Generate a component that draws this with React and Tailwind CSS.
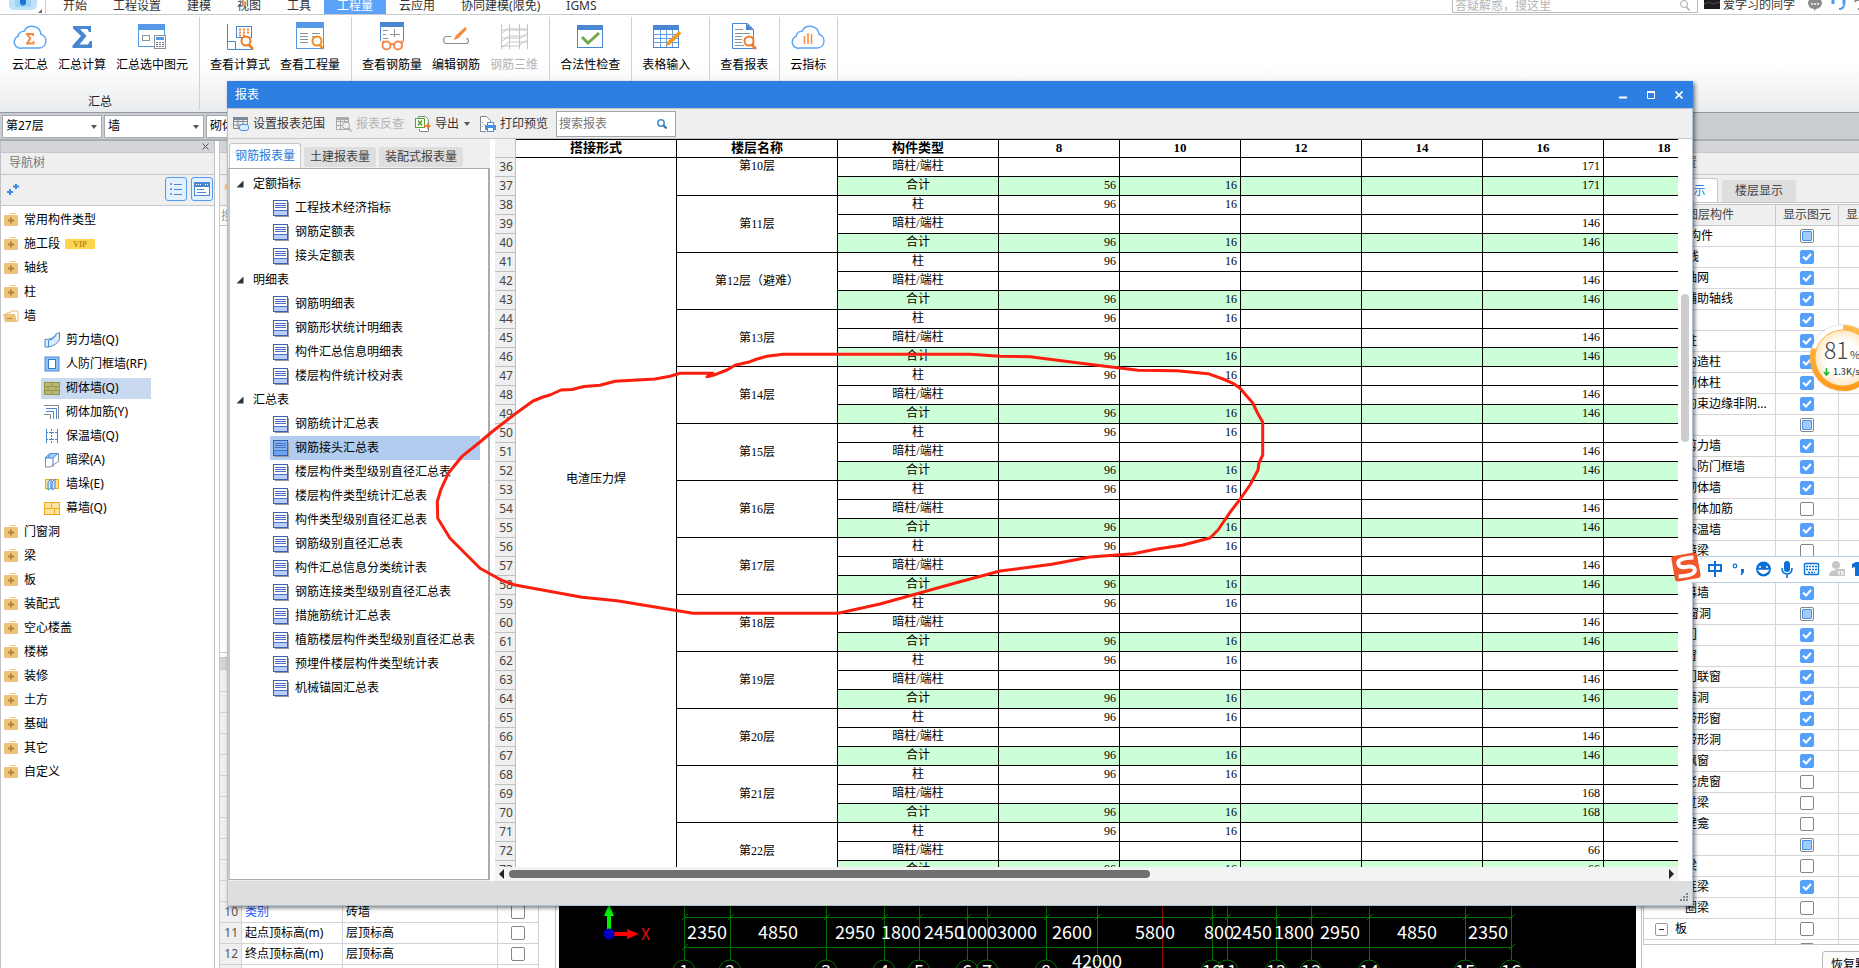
import React from "react";

/* ---------- ribbon icons (36 x 32) ---------- */
const CLOUD = "M10 28h17a7 7 0 0 0 2-13.700a9 9 0 0 0-17-3a6 6 0 0 0-6 5a6.200 6.200 0 0 0 4 11.700z";
const RIBBON_ICONS = {
  cloudSum: (
    <>
      <path d={CLOUD} fill="#fff" stroke="#5ba7f5" strokeWidth="1.500" />
      <path d="M14 13h8v3h-1.500l-.5-1h-3l2.500 3.500l-2.500 4h3.500l.5-1.500h1.500v3.500h-8.500v-1.500l3.200-4.500l-3.200-4z" fill="#f58b3c" />
    </>
  ),
  sigma: <path d="M9 6h18v6h-2l-1.500-3h-7.500l6.500 7l-7 8.500h8.500l2-3.500h2v7H8.500v-2.500l8.500-9.500l-8-7.500z" fill="#4a87d3" />,
  selectSum: (
    <>
      <rect x="4.500" y="4.500" width="26" height="22" fill="#fff" stroke="#5598e6" />
      <rect x="4" y="4" width="27" height="6" fill="#5598e6" />
      <rect x="8.500" y="15.500" width="7" height="5" fill="#fff" stroke="#8a9299" />
      <rect x="20.500" y="15.500" width="11" height="13" fill="#fff" stroke="#8a9299" />
      <rect x="22" y="17" width="8" height="3" fill="#5598e6" />
      <path d="M22 22.500h8M22 24.500h8M22 26.500h8" stroke="#6b7b8a" strokeDasharray="2 1" />
    </>
  ),
  formula: (
    <>
      <path d="M5.500 4v25.500H31M5.500 21.500h8v8" fill="none" stroke="#4a87d3" />
      <rect x="14.500" y="6.500" width="15" height="11" fill="#fff" stroke="#4a87d3" />
      <path d="M17 9.500h10M17 12.500h10M17 15.500h6" stroke="#f58b3c" strokeWidth="2" strokeDasharray="2 2" />
      <circle cx="24" cy="21" r="4.500" fill="#fff" stroke="#f07b28" strokeWidth="2" />
      <path d="M27 25l4 4" stroke="#f07b28" strokeWidth="2.500" />
    </>
  ),
  quantity: (
    <>
      <rect x="4.500" y="3.500" width="27" height="25" fill="#fff" stroke="#5598e6" />
      <rect x="4" y="2" width="28" height="6" fill="#5598e6" />
      <path d="M8 13.500h8M8 16.500h8M8 19.500h8M8 22.500h8M20 13.500h8M20 16.500h4" stroke="#8a9299" />
      <circle cx="25" cy="21" r="4.500" fill="#fff" stroke="#f58b20" strokeWidth="2" />
      <path d="M28 25l3 4" stroke="#f58b20" strokeWidth="2.500" />
    </>
  ),
  rebarQty: (
    <>
      <path d="M6.500 21V3h23v18" fill="#fff" stroke="#4a87d3" />
      <rect x="6" y="2" width="24" height="5" fill="#4a87d3" />
      <path d="M9 10.500h5M9 14.500h3M9 18.500h5M16 14.500h10M20.500 9v8" stroke="#8a9299" />
      <circle cx="12.500" cy="25.500" r="4" fill="#fff" stroke="#f58b4c" strokeWidth="2" />
      <circle cx="24" cy="25.500" r="4" fill="#fff" stroke="#f58b4c" strokeWidth="2" />
      <path d="M16 25q2-2 4 0M8 23l2-2M29 23l-2-2" fill="none" stroke="#f58b4c" strokeWidth="2" />
    </>
  ),
  rebarEdit: (
    <>
      <path d="M13 16.500H9a3.500 3.500 0 0 0 0 7h19a2.500 2.500 0 0 0 0-5" fill="none" stroke="#8a9299" strokeWidth="1.200" />
      <path d="M16 20l1.500-4L27 7l2 2L20 18.500z" fill="#f58b3c" />
    </>
  ),
  rebar3d: <path d="M5.500 4v25M13.500 4v25M23.500 4v25M31.500 4v25M5 10h26.500M5 18h20l6-5M5 26h17l9-6M5 14l6-5h20M5 22l8-6h18M5 28l8-6h18" fill="none" stroke="#c3c5c8" />,
  check: (
    <>
      <rect x="5.500" y="5.500" width="25" height="22" fill="#fff" stroke="#4a87d3" />
      <rect x="5" y="5" width="26" height="5" fill="#4a87d3" />
      <path d="M10 17l6 6l11-10" fill="none" stroke="#6cab4c" strokeWidth="3" />
    </>
  ),
  tableInput: (
    <>
      <rect x="5.500" y="6.500" width="25" height="21" fill="#fff" stroke="#4a87d3" />
      <rect x="5" y="5" width="26" height="5" fill="#4a87d3" />
      <path d="M5 14.500h25M5 18.500h25M5 22.500h25M12.500 10v17M18.500 10v17M24.500 10v17" stroke="#6a9fe0" />
      <path d="M18 26l1-4l12-11l2.500 2.500L22 24.500z" fill="#f5961e" />
    </>
  ),
  report: (
    <>
      <path d="M6.500 3.500h15l6 6v19h-21z" fill="#fff" stroke="#4a87d3" />
      <path d="M20 3v7h7.500z" fill="#4a87d3" />
      <path d="M9 9.500h8M9 13.500h15M9 16.500h7M9 19.500h7M9 22.500h7M9 25.500h9" stroke="#8a9299" />
      <circle cx="23" cy="21" r="4.500" fill="#fff" stroke="#f07b28" strokeWidth="2" />
      <path d="M26 25l4 4" stroke="#f07b28" strokeWidth="2.500" />
    </>
  ),
  cloudIndex: (
    <>
      <path d={CLOUD} fill="#fff" stroke="#5ba7f5" strokeWidth="1.500" />
      <path d="M14.500 16v8M18 13v11M21.500 14v10" stroke="#f58b3c" strokeWidth="1.500" />
    </>
  ),
};

const RIBBON = [
  { cls: "pl-3 pr-[11px]", caption: "汇总", items: [["云汇总", "cloudSum"], ["汇总计算", "sigma"], ["汇总选中图元", "selectSum"]] },
  { cls: "pl-[10px] pr-[11px]", items: [["查看计算式", "formula"], ["查看工程量", "quantity"]] },
  { cls: "pl-[10px] pr-[11px]", items: [["查看钢筋量", "rebarQty"], ["编辑钢筋", "rebarEdit"], ["钢筋三维", "rebar3d", true]] },
  { cls: "pl-[10px] pr-[11px]", items: [["合法性检查", "check"]] },
  { cls: "pl-[10px] pr-[19px]", items: [["表格输入", "tableInput"]] },
  { cls: "pl-[10px] pr-[11px]", items: [["查看报表", "report"]] },
  { cls: "pl-[10px] pr-[11px]", items: [["云指标", "cloudIndex"]] },
];

const MENU = ["开始", "工程设置", "建模", "视图", "工具", "工程量", "云应用", "协同建模(限免)", "IGMS"];

function TopBar() {
  return (
    <header className="flex h-[15px] shrink-0 items-start overflow-hidden border-b border-[#c9cacc] bg-white">
      <div className="flex w-[46px] shrink-0 justify-center border-r border-[#c9cacc]">
        <svg width="34" height="14" viewBox="0 0 34 14" className="ml-1">
          <path d="M1 0h28v5a5 5 0 0 1-5 5H6a5 5 0 0 1-5-5z" fill="#bfe3fb" />
          <path d="M7 0h16v7H7z" fill="#9fd3f8" />
          <path d="M12 0h6v2a3 3.500 0 0 1-6 0z" fill="#1677d8" />
          <path d="M34 9v4h-4z" fill="#666" />
        </svg>
      </div>
      <nav className="ml-1 flex">
        {MENU.map((m) => (
          <button
            key={m}
            className={
              "h-[14px] px-[13px] pb-[3px] leading-[11px] whitespace-nowrap " +
              (m === "工程量" ? "bg-[#5ba3f8] text-white" : "text-[#333]")
            }
          >
            {m}
          </button>
        ))}
      </nav>
      <div className="ml-auto flex shrink-0 items-start">
        <label className="flex h-[13px] w-[246px] items-center border border-t-0 border-[#bbb] px-[2px] pb-[2px]">
          <input aria-label="答疑解惑" placeholder="答疑解惑，搜这里" className="h-3 min-w-0 flex-1 bg-transparent leading-3 outline-none placeholder:text-[#b5b5b5]" />
          <svg width="12" height="11" viewBox="0 0 12 11" className="mr-1">
            <circle cx="5" cy="4" r="3.500" fill="none" stroke="#aaa" />
            <path d="M7.500 7l3 3.500" stroke="#aaa" strokeWidth="1.500" />
          </svg>
        </label>
        <svg width="16" height="9" viewBox="0 0 16 9" className="ml-[6px]">
          <rect width="16" height="9" fill="#1c1c20" />
          <path d="M0 4l5-2l4 2l7-2" stroke="#5c4a4e" fill="none" />
        </svg>
        <span className="ml-[3px] leading-[9px] whitespace-nowrap text-[#333]">爱学习的同学</span>
        <svg width="56" height="12" viewBox="0 0 56 12" className="ml-2">
          <path d="M5 3a7 5.500 0 0 1 14 0a7 6 0 0 1-6 6l-2 2v-2a6 6 0 0 1-6-6z" fill="#8b8b8b" />
          <path d="M8 4h8" stroke="#fff" strokeWidth="1.500" strokeDasharray="2 1" />
          <path d="M30 0v4M41 0v4" stroke="#4f9cf3" strokeWidth="3" />
          <path d="M41 4q0 5-5 5" fill="none" stroke="#4f9cf3" strokeWidth="2" />
          <path d="M52 2q1-3 4-2t1 5v2M56 8v2" fill="none" stroke="#888" strokeWidth="2" />
        </svg>
      </div>
    </header>
  );
}

function Ribbon() {
  return (
    <section className="flex h-[98px] shrink-0 items-stretch border-b border-[#94979c] bg-gradient-to-b from-white via-white to-[#e9ecee]">
      {RIBBON.map((g, i) => (
        <div key={i} className={"mt-[2px] mb-[2px] flex flex-col justify-between border-r border-[#d0d2d4] " + g.cls}>
          <div className="flex gap-[10px]">
            {g.items.map(([label, icon, off]) => (
              <button key={label} disabled={!!off} className={"flex flex-col items-center pt-[3px] whitespace-nowrap " + (off ? "text-[#b3b3b3]" : "text-black")}>
                <svg width="36" height="32" viewBox="0 0 36 32">{RIBBON_ICONS[icon]}</svg>
                <span className="mt-[5px] leading-4">{label}</span>
              </button>
            ))}
          </div>
          {g.caption && <div className="text-center leading-4 text-[#222]">{g.caption}</div>}
        </div>
      ))}
    </section>
  );
}

function Combo({ label, value }) {
  return (
    <label className="relative block w-[100px]">
      <select aria-label={label} className="h-[23px] w-full appearance-none border border-[#a5a8ac] bg-white pl-[3px] leading-5 text-black outline-none">
        <option>{value}</option>
      </select>
      <svg width="6" height="4" viewBox="0 0 6 4" className="pointer-events-none absolute top-[10px] right-[5px]">
        <path d="M0 0h6L3 4z" fill="#555" />
      </svg>
    </label>
  );
}

/* ---------- navigation tree ---------- */
const WALLS = [
  ["剪力墙(Q)", <><path d="M1 7.500q8 0 11-5.500l3.500-1.500v7q-3 6-11 7.500H1z" fill="#dcebfb" stroke="#4a87d3" /><path d="M4.500 15V8.500q5-1 7.500-5" fill="none" stroke="#4a87d3" /></>],
  ["人防门框墙(RF)", <><rect x="1" y="1" width="14" height="14" fill="#8fc0f6" stroke="#4a8fe0" /><rect x="4.500" y="3.500" width="7" height="9" fill="#fff" stroke="#3a78c8" /></>],
  ["砌体墙(Q)", <><rect x=".5" y="2.500" width="15" height="12" fill="#b5b878" stroke="#989440" /><path d="M0 6.500h16M0 10.500h16M8 2v4M4 6v4M12 6v4M8 10v4" stroke="#989440" /></>],
  ["砌体加筋(Y)", <><path d="M2 4.500h10.500V15M2 7.500h7.500V15" fill="none" stroke="#4a87d3" /><path d="M0 1.500h14.500V15M0 10.500h6.500V15" fill="none" stroke="#888" /></>],
  ["保温墙(Q)", <><path d="M2.500 1v14M13.500 1v14" stroke="#4a87d3" /><path d="M7.500 1v14M2 4.500h12M2 11.500h12" stroke="#4a87d3" strokeDasharray="2 1" /></>],
  ["暗梁(A)", <><path d="M1.500 6l5-4.500h8v8L6 15H1.500z" fill="#fff" stroke="#8a9299" /><path d="M1 6l5-4.500h8L9 6zM5 6V3M9 6v9" fill="#a9d0fa" stroke="#4a87d3" /></>],
  ["墙垛(E)", <><rect x="1.500" y="3.500" width="13" height="9" fill="#ffe2a0" stroke="#f0a818" /><path d="M4 6l3-3v9l-3 2zM8 6l3-3v9l-3 2z" fill="#cfe3fb" stroke="#4a87d3" /></>],
  ["幕墙(Q)", <><rect x=".5" y="2.500" width="15" height="12" fill="#ffe2a0" stroke="#f0a818" /><path d="M0 8.500h16M7.500 2v6M10.500 8v6" stroke="#f0a818" /></>],
];
const NAV_TOP = ["常用构件类型", "施工段", "轴线", "柱"];
const NAV_BOTTOM = ["门窗洞", "梁", "板", "装配式", "空心楼盖", "楼梯", "装修", "土方", "基础", "其它", "自定义"];

function Folder({ open }) {
  return (
    <svg width="16" height="16" viewBox="0 0 16 16" className="shrink-0">
      {open ? (
        <>
          <path d="M3 5h4l1-2h7v10H3z" fill="#fff" stroke="#e8bf7a" />
          <path d="M0 6h12l2 8H2z" fill="#ecc27c" />
          <path d="M4 10.500h5" stroke="#b88530" />
        </>
      ) : (
        <>
          <path d="M7 1h6v1H7z" fill="#ecc27c" />
          <rect x="1" y="3" width="14" height="11" rx="1" fill="#ecc27c" />
          <path d="M8 5.500v6M5 8.500h6" stroke="#b88530" strokeWidth="2" />
        </>
      )}
    </svg>
  );
}

function NavFolder({ label, open }) {
  return (
    <li className="flex h-6 items-center gap-[5px] pl-[2px]">
      <Folder open={open} />
      <span>{label}</span>
      {label === "施工段" && (
        <span className="h-[10px] w-[30px] bg-[#ffd54f] text-center font-['Liberation_Serif',serif] text-[8px] leading-[11px] font-bold text-[#b98a1a]">VIP</span>
      )}
    </li>
  );
}

function NavPanel() {
  return (
    <aside className="flex w-[215px] shrink-0 flex-col border-x border-[#bfc1c5] bg-white">
      <div className="flex h-3 shrink-0 items-center justify-end border-b border-[#c4c6ca] bg-[#d4d5da] pr-[5px]">
        <button aria-label="关闭导航树">
          <svg width="7" height="7" viewBox="0 0 7 7"><path d="M.5 .5l6 6M6.500 .5l-6 6" stroke="#555" /></svg>
        </button>
      </div>
      <h2 className="h-[22px] shrink-0 border-b border-[#c4c6ca] bg-[#efefef] pl-2 leading-5 text-[#777]">导航树</h2>
      <div className="flex h-[31px] shrink-0 items-center gap-1 border-b border-[#c4c6ca] bg-[#efefef] pr-px pb-[2px] pl-[6px]">
        <svg width="12" height="12" viewBox="0 0 12 12"><path d="M3 6v6M0 9h6M9 1v5M6 3.500h6" stroke="#3e86e0" strokeWidth="2" /></svg>
        <button aria-label="列表视图" className="ml-auto grid h-6 w-[22px] place-items-center rounded-[3px] border border-[#4f9cf3] bg-[#e4f0fd]">
          <svg width="14" height="14" viewBox="0 0 14 14">
            <path d="M5 2.500h8M5 7.500h8M5 12.500h8" stroke="#4a87d3" />
            <path d="M1.500 1.500h1v1h-1zM1.500 6.500h1v1h-1zM1.500 11.500h1v1h-1z" fill="none" stroke="#4a87d3" />
          </svg>
        </button>
        <button aria-label="卡片视图" className="grid h-6 w-[22px] place-items-center rounded-[3px] border border-[#4f9cf3] bg-[#e4f0fd]">
          <svg width="16" height="14" viewBox="0 0 16 14">
            <rect x=".5" y=".5" width="15" height="13" fill="#fff" stroke="#4a87d3" />
            <rect width="16" height="5" fill="#4a87d3" />
            <path d="M2 2.500h6M11 2.500h3" stroke="#fff" strokeDasharray="1 1" />
            <path d="M3 7.500h7M3 10.500h9" stroke="#4a87d3" />
          </svg>
        </button>
      </div>
      <ul className="pt-[2px]">
        {NAV_TOP.map((n) => <NavFolder key={n} label={n} />)}
        <NavFolder label="墙" open />
        {WALLS.map(([n, icon]) => (
          <li key={n} className="flex h-6 items-center pl-10">
            <div className={"flex h-[21px] w-[110px] items-center gap-[6px] pl-[3px] " + (n === "砌体墙(Q)" ? "bg-[#c9d9ef]" : "")}>
              <svg width="16" height="16" viewBox="0 0 16 16" className="shrink-0">{icon}</svg>
              <span className="whitespace-nowrap">{n}</span>
            </div>
          </li>
        ))}
        {NAV_BOTTOM.map((n) => <NavFolder key={n} label={n} />)}
      </ul>
    </aside>
  );
}

/* ---------- check box in the tables ---------- */
function Tick({ label, state }) {
  return (
    <label className="grid place-items-center">
      <input
        type="checkbox"
        aria-label={label}
        defaultChecked={state === "on"}
        className="col-start-1 row-start-1 size-[14px] appearance-none rounded-[2px] border border-[#858585] bg-white checked:border-[#55a1fa] checked:bg-[#55a1fa]"
      />
      {state === "on" && (
        <svg width="10" height="8" viewBox="0 0 10 8" className="pointer-events-none col-start-1 row-start-1">
          <path d="M1 3.500l3 3l5-5.500" fill="none" stroke="#fff" strokeWidth="2" />
        </svg>
      )}
      {state === "mid" && <span className="pointer-events-none col-start-1 row-start-1 size-[10px] rounded-[1px] border border-[#3b93f7] bg-[#a2cbfb]" />}
    </label>
  );
}

/* ---------- component list and properties ---------- */
const PROPS = [
  ...Array.from({ length: 9 }, () => ["", "", ""]),
  ["10", "类别", "砖墙"],
  ["11", "起点顶标高(m)", "层顶标高"],
  ["12", "终点顶标高(m)", "层顶标高"],
  ["13", "", ""],
];

function PropertyColumn() {
  return (
    <section className="flex w-[337px] shrink-0 flex-col border-x border-[#c4c6ca] bg-white">
      <div className="flex h-[512px] shrink-0 flex-col border-b border-[#c4c6ca]">
        <div className="h-3 border-b border-[#c4c6ca] bg-[#d4d5da]" />
        <div className="h-[22px] border-b border-[#c4c6ca] bg-[#efefef]" />
        <div className="flex h-[31px] border-b border-[#c4c6ca] bg-[#efefef] pl-1">
          <svg width="8" height="8" viewBox="0 0 8 8" className="mt-2"><path d="M4 0v8M0 4h8M1 1l6 6M7 1l-6 6" stroke="#f5a12e" /></svg>
        </div>
        <div className="h-[20px] border-b border-[#c4c6ca] pl-[1px] leading-[19px] text-[#999]">搜</div>
      </div>
      <div className="mt-1 h-[13px] shrink-0 border-y border-[#c4c6ca] bg-[#d4d5da]" />
      <div className="h-[22px] shrink-0 border-b border-[#d2d2d2] bg-[#efefef]" />
      <div className="h-[21px] shrink-0 border-b border-[#d2d2d2] bg-[#efefef]" />
      <table className="w-[319px] table-fixed border-separate border-spacing-0">
        <colgroup>
          <col className="w-[22px]" /><col className="w-[101px]" /><col className="w-[155px]" /><col className="w-[41px]" />
        </colgroup>
        <tbody>
          {PROPS.map(([n, name, value], i) => (
            <tr key={i} className="h-[21px]">
              <td className="border-r border-b border-[#d2d2d2] bg-[#efefef] p-0 pr-[3px] text-right leading-5 text-[#555]">{n}</td>
              <td className={"border-r border-b border-[#d2d2d2] p-0 pl-[3px] leading-5 whitespace-nowrap " + (n === "10" ? "text-[#1f5cff]" : "")}>{name}</td>
              <td className="border-r border-b border-[#d2d2d2] p-0 pl-[3px] leading-5">{value}</td>
              <td className="border-r border-b border-[#d2d2d2] p-0"><Tick label={"附加 " + (name || i + 1)} /></td>
            </tr>
          ))}
        </tbody>
      </table>
    </section>
  );
}

/* ---------- drawing canvas ---------- */
const AXES = [125, 171, 267, 325, 360, 408, 428, 487, 538, 653, 668, 717, 752, 810, 906, 952];
const DIMS = [
  [148, "2350"], [219, "4850"], [296, "2950"], [342, "1800"], [385, "2450"], [418, "1000"], [458, "3000"], [513, "2600"],
  [596, "5800"], [660, "800"], [693, "2450"], [735, "1800"], [781, "2950"], [858, "4850"], [929, "2350"],
];

function Canvas() {
  return (
    <section className="flex min-w-0 flex-1 items-end overflow-hidden bg-black">
      <svg width="1077" height="68" viewBox="0 0 1077 68" className="shrink-0 font-['Noto_Sans_CJK_SC',sans-serif]">
        <path d="M603.500 0v68" stroke="#8c0c0c" />
        <g stroke="#007200" fill="none">
          <path d="M125 17.500h827M125 47.500h827" />
          {AXES.map((x) => (
            <g key={x}>
              <path d={`M${x}.500 0v60`} />
              <path d={`M${x - 2} 20l6-6`} />
              <circle cx={x} cy="71" r="11" />
            </g>
          ))}
          <path d="M123 50l6-6M950 50l6-6" />
        </g>
        <g fill="#fff" fontSize="18" textAnchor="middle">
          {DIMS.map(([x, t]) => <text key={x} x={x} y="39">{t}</text>)}
          <text x="538" y="68">42000</text>
          {AXES.map((x, i) => i !== 8 && <text key={x} x={x} y="78">{i + 1}</text>)}
        </g>
        <path d="M50 34V12" stroke="#00f000" strokeWidth="4" />
        <path d="M45 16l5-12l5 12z" fill="#00f000" />
        <path d="M50 34h20" stroke="#f00" strokeWidth="4" />
        <path d="M68 29l12 5l-12 5z" fill="#f00" />
        <circle cx="50" cy="34" r="5.500" fill="#0000c0" />
        <text x="82" y="40" fill="#e01010" fontSize="16">X</text>
      </svg>
    </section>
  );
}

/* ---------- layer panel ---------- */
const LAYERS = [
  ["所有构件", "mid", 0], ["轴线", "on", 1], ["轴网", "on", 2], ["辅助轴线", "on", 2], ["柱", "on", 1], ["柱", "on", 2],
  ["构造柱", "on", 2], ["砌体柱", "on", 2], ["约束边缘非阴...", "on", 2], ["墙", "mid", 1], ["剪力墙", "on", 2],
  ["人防门框墙", "on", 2], ["砌体墙", "on", 2], ["砌体加筋", "off", 2], ["保温墙", "on", 2], ["暗梁", "off", 2],
  ["墙垛", "on", 2], ["幕墙", "on", 2], ["门窗洞", "mid", 1], ["门", "on", 2], ["窗", "on", 2], ["门联窗", "on", 2],
  ["墙洞", "on", 2], ["带形窗", "on", 2], ["带形洞", "on", 2], ["飘窗", "on", 2], ["老虎窗", "off", 2], ["过梁", "off", 2],
  ["壁龛", "off", 2], ["梁", "mid", 1], ["梁", "off", 2], ["连梁", "on", 2], ["圈梁", "off", 2], ["板", "off", 1], ["", "off", 2],
];
const INDENT = ["pl-[21px]", "pl-[31px]", "pl-[41px]"];

function LayerPanel() {
  return (
    <aside className="flex w-[223px] shrink-0 flex-col overflow-hidden bg-white pl-[5px]">
      <div className="flex flex-1 flex-col border-l border-[#bfc1c5]">
        <div className="h-3 shrink-0 border-b border-[#c4c6ca] bg-[#d4d5da]" />
        <h2 className="h-[22px] shrink-0 border-b border-[#c4c6ca] bg-[#efefef] pl-[7px] leading-5 text-[#777]">显示设置</h2>
        <div className="flex h-[28px] shrink-0 items-end gap-1 border-b border-[#c4c6ca] bg-[#efefef] pl-[3px]">
          <button className="h-6 w-[73px] rounded-tr-[3px] border border-b-0 border-[#c4c6ca] bg-white text-[#2a7fe0]">图元显示</button>
          <button className="h-[22px] w-[74px] rounded-t-[3px] bg-[#dedede] text-[#444]">楼层显示</button>
        </div>
        <div className="mt-px ml-px h-[741px] shrink-0 overflow-hidden border border-r-0 border-[#c4c6ca]">
          <table className="w-[273px] table-fixed border-separate border-spacing-0">
            <colgroup><col className="w-[132px]" /><col className="w-[63px]" /><col className="w-[78px]" /></colgroup>
            <thead>
              <tr className="h-[21px] bg-[#efefef] text-[#444]">
                <th className="border-r border-b border-[#c8c8c8] p-0 pl-[42px] text-left leading-5 font-normal">图层构件</th>
                <th className="border-r border-b border-[#c8c8c8] p-0 leading-5 font-normal">显示图元</th>
                <th className="border-r border-b border-[#c8c8c8] p-0 pl-[7px] text-left leading-5 font-normal">显示名称</th>
              </tr>
            </thead>
            <tbody>
              {LAYERS.map(([name, st, lvl], i) => (
                <tr key={i} className="h-[21px]">
                  <td className="border-r border-b border-[#d6d6d6] p-0">
                    <div className={"flex h-5 items-center whitespace-nowrap " + (name === "板" ? "pl-[11px]" : INDENT[lvl])}>
                      {name === "板" && (
                        <button aria-label="折叠板" className="mr-[7px] grid size-[13px] place-items-center rounded-[2px] border border-[#999]">
                          <svg width="5" height="1" viewBox="0 0 5 1"><path d="M0 .5h5" stroke="#333" /></svg>
                        </button>
                      )}
                      {name}
                    </div>
                  </td>
                  <td className="border-r border-b border-[#d6d6d6] p-0"><Tick label={"显示 " + name} state={st} /></td>
                  <td className="border-b border-[#d6d6d6] p-0" />
                </tr>
              ))}
            </tbody>
          </table>
        </div>
        <div className="flex pt-[6px] pl-[180px]">
          <button className="h-7 w-[66px] shrink-0 rounded-[3px] border border-[#b8b8b8] bg-[#fbfbfb] whitespace-nowrap">恢复默认</button>
        </div>
      </div>
    </aside>
  );
}

/* ---------- report dialog ---------- */
const REPORTS = [
  ["定额指标", ["工程技术经济指标", "钢筋定额表", "接头定额表"]],
  ["明细表", ["钢筋明细表", "钢筋形状统计明细表", "构件汇总信息明细表", "楼层构件统计校对表"]],
  ["汇总表", ["钢筋统计汇总表", "钢筋接头汇总表", "楼层构件类型级别直径汇总表", "楼层构件类型统计汇总表", "构件类型级别直径汇总表", "钢筋级别直径汇总表", "构件汇总信息分类统计表", "钢筋连接类型级别直径汇总表", "措施筋统计汇总表", "植筋楼层构件类型级别直径汇总表", "预埋件楼层构件类型统计表", "机械锚固汇总表"]],
];

function ReportIcon({ active }) {
  return (
    <svg width="17" height="17" viewBox="0 0 17 17" className="shrink-0">
      <path d="M2 2h14v15H2z" fill="#9a9a9a" />
      <rect x=".5" y=".5" width="14" height="15" fill={active ? "#7fb4f4" : "#fff"} stroke="#3c5fae" />
      <rect x="1" y="10" width="13" height="5" fill={active ? "#6aa3ee" : "#b9cdfb"} />
      <path d="M2 3.500h11M2 5.500h11M2 7.500h11M1 10.500h13" stroke="#4a6fc4" />
    </svg>
  );
}

function ReportTree() {
  return (
    <ul className="min-h-0 flex-1 overflow-hidden border-x-2 border-y border-[#a9abae] border-l-[#c4c6ca] bg-white pt-[3px]">
      {REPORTS.map(([g, items]) => (
        <li key={g}>
          <div className="flex h-6 items-center gap-[9px] pl-[6px]">
            <svg width="8" height="8" viewBox="0 0 8 8"><path d="M7.500 .5v7h-7z" fill="#333" /></svg>
            <span>{g}</span>
          </div>
          <ul>
            {items.map((t) => (
              <li key={t} className="pr-2 pl-10">
                <button className={"flex h-6 w-full items-center gap-[5px] pl-[3px] text-left whitespace-nowrap " + (t === "钢筋接头汇总表" ? "bg-[#b1ccee]" : "")}>
                  <ReportIcon active={t === "钢筋接头汇总表"} />
                  <span>{t}</span>
                </button>
              </li>
            ))}
          </ul>
        </li>
      ))}
    </ul>
  );
}

const DIAMETERS = ["8", "10", "12", "14", "16", "18"];
const steel = (floor) => (floor === 10 ? "171" : floor === 21 ? "168" : floor === 22 ? "66" : "146");
const ROWS = Array.from({ length: 38 }, (_, i) => {
  const n = 36 + i;
  const floor = 10 + Math.floor((n - 35) / 3);
  const kind = (n - 35) % 3;
  const name = floor === 12 ? "第12层（避难）" : `第${floor}层`;
  const d8 = floor === 10 ? "56" : "96";
  const values =
    kind === 0 ? [d8, "16", "", "", "", ""] : kind === 1 ? ["", "", "", "", steel(floor), ""] : [d8, "16", "", "", steel(floor), ""];
  return { n, kind, name, values, type: ["柱", "暗柱/端柱", "合计"][kind] };
});

function ReportTable() {
  return (
    <table className="w-[1230px] table-fixed border-separate border-spacing-0 font-['Liberation_Serif','Noto_Sans_CJK_SC',serif]">
      <colgroup>
        <col className="w-[21px]" /><col className="w-[161px]" /><col className="w-[161px]" /><col className="w-[161px]" />
        {DIAMETERS.map((d) => <col key={d} className="w-[121px]" />)}
      </colgroup>
      <thead>
        <tr className="h-[19px] text-[13px]">
          <td className="border-r border-b border-[#c0c0c0] bg-[#f0f0f0] p-0" />
          {["搭接形式", "楼层名称", "构件类型", ...DIAMETERS].map((h) => (
            <th key={h} className="border-t border-r border-b border-black p-0 pb-[2px] leading-[15px]">{h}</th>
          ))}
        </tr>
      </thead>
      <tbody>
        {ROWS.map(({ n, kind, name, values, type }, i) => (
          <tr key={n} className="h-[19px]">
            <th className="border-r border-b border-[#c0c0c0] bg-[#f0f0f0] p-0 pl-[2px] font-['Noto_Sans',sans-serif] leading-[18px] font-normal text-[#444]">{n}</th>
            {i === 0 && <td rowSpan={ROWS.length} className="border-r border-black p-0 pt-[312px] text-center align-top leading-[18px]">电渣压力焊</td>}
            {i === 0 && <td rowSpan={2} className="border-r border-b border-black p-0 text-center align-top leading-[17px]">{name}</td>}
            {kind === 0 && <td rowSpan={3} className="border-r border-b border-black p-0 pb-px text-center leading-4">{name}</td>}
            <td className={"border-r border-b border-black p-0 pb-px text-center leading-[17px] " + (kind === 2 ? "bg-[#ccffd8]" : "")}>{type}</td>
            {values.map((v, k) => (
              <td key={k} className={"border-r border-b border-black p-0 pr-[3px] pb-px text-right leading-[17px] " + (kind === 2 ? "bg-[#ccffd8]" : "")}>{v}</td>
            ))}
          </tr>
        ))}
      </tbody>
    </table>
  );
}

function DialogTools() {
  return (
    <div className="flex h-[31px] shrink-0 items-center border-y border-[#c4c6ca] bg-[#efefef] pl-[5px] whitespace-nowrap text-[#333]">
      <button className="flex items-center gap-1">
        <svg width="16" height="16" viewBox="0 0 16 16">
          <path d="M.5 1.500h14v11H.5zM0 5.500h15M0 9h15M5 1v12M10 1v12" fill="none" stroke="#7d8b99" />
          <path d="M0 1h15v3H0z" fill="#7d8b99" />
          <rect x="6.500" y="8.500" width="9" height="6" rx="2" fill="#d8eafd" stroke="#4a90e2" />
        </svg>
        设置报表范围
      </button>
      <button disabled className="ml-[11px] flex items-center gap-1 text-[#b5b5b5]">
        <svg width="16" height="16" viewBox="0 0 16 16">
          <path d="M.5 1.500h12v12H.5zM0 5.500h13M0 9.500h13M4.500 1v12M8.500 1v12" fill="none" stroke="#aaa" />
          <path d="M0 1h13v3H0z" fill="#aaa" />
          <circle cx="10" cy="9.500" r="3.500" fill="#eee" stroke="#aaa" /><path d="M12.500 12l3 3.500" stroke="#aaa" strokeWidth="1.500" />
        </svg>
        报表反查
      </button>
      <button className="ml-[11px] flex items-center gap-1">
        <svg width="16" height="16" viewBox="0 0 16 16">
          <path d="M3.500 3V.5h7l3 3v12h-9V13" fill="#fff" stroke="#7d8b99" />
          <rect x=".5" y="2.500" width="9" height="9" fill="#fff" stroke="#58a32c" />
          <path d="M3 4.500l4 5M7 4.500l-4 5" stroke="#58a32c" strokeWidth="1.500" />
          <path d="M9 9h3V6.500L16 10l-4 3.500V11H9z" fill="#f07b28" />
        </svg>
        导出
        <svg width="6" height="4" viewBox="0 0 6 4" className="ml-px"><path d="M0 0h6L3 4z" fill="#555" /></svg>
      </button>
      <button className="ml-[10px] flex items-center gap-1">
        <svg width="16" height="16" viewBox="0 0 16 16">
          <path d="M6 15.500H.5V.5h6l4 4V6" fill="#fff" stroke="#7d8b99" />
          <path d="M2.500 6v1M4 8v1M2.500 10v1" stroke="#7d8b99" />
          <rect x="5" y="9" width="11" height="5" fill="#4a90e2" />
          <rect x="7.500" y="6.500" width="6" height="3" fill="#fff" stroke="#4a90e2" />
          <rect x="7.500" y="11.500" width="6" height="4" fill="#fff" stroke="#4a90e2" />
        </svg>
        打印预览
      </button>
      <label className="ml-2 flex h-[26px] w-[120px] items-center border border-[#a5a5a5] bg-white pr-2 pl-[2px]">
        <input aria-label="搜索报表" placeholder="搜索报表" className="min-w-0 flex-1 outline-none placeholder:text-[#777]" />
        <svg width="10" height="10" viewBox="0 0 10 10">
          <circle cx="4" cy="4" r="3.200" fill="#fff" stroke="#3f8fc8" strokeWidth="1.500" />
          <path d="M6.500 6.500l3 3" stroke="#2c6da8" strokeWidth="2" />
        </svg>
      </label>
    </div>
  );
}

function ReportDialog() {
  return (
    <section role="dialog" aria-label="报表" className="absolute top-[81px] right-[166px] bottom-[62px] left-[227px] flex flex-col bg-[#dddee0] shadow-[2px_2px_4px_rgba(0,0,0,0.5)]">
      <div className="flex h-[27px] shrink-0 items-center bg-[#2d80e1] pr-[10px] pl-2 text-white">
        <h1>报表</h1>
        <div className="ml-auto flex gap-5">
          <button aria-label="最小化"><svg width="8" height="8" viewBox="0 0 8 8"><path d="M0 6.500h8" stroke="#fff" strokeWidth="2" /></svg></button>
          <button aria-label="最大化"><svg width="8" height="8" viewBox="0 0 8 8"><path d="M.5 1h7v6.500h-7z" fill="none" stroke="#fff" /><path d="M0 1h8" stroke="#fff" strokeWidth="2" /></svg></button>
          <button aria-label="关闭"><svg width="8" height="8" viewBox="0 0 8 8"><path d="M.5 .5l7 7M7.500 .5l-7 7" stroke="#fff" strokeWidth="1.600" /></svg></button>
        </div>
      </div>
      <div className="flex min-h-0 flex-1 flex-col border border-t-0 border-[#b4c1d0]">
        <DialogTools />
        <div className="flex min-h-0 flex-1">
          <div className="flex w-[262px] shrink-0 flex-col bg-[#efefef] pb-px">
            <div className="flex h-[29px] shrink-0 items-end gap-[3px] pl-px whitespace-nowrap">
              <button className="h-[25px] rounded-t-[3px] border border-b-0 border-[#c4c6ca] bg-white px-[5px] text-[#1f7be0]">钢筋报表量</button>
              <button className="mb-px h-[20px] rounded-t-[3px] bg-[#dedede] px-[6px] text-[#444]">土建报表量</button>
              <button className="mb-px h-[20px] rounded-t-[3px] bg-[#dedede] px-[6px] text-[#444]">装配式报表量</button>
            </div>
            <ReportTree />
          </div>
          <div className="flex min-w-0 flex-1 bg-white pl-[5px]">
            <div className="flex min-w-0 flex-1 flex-col">
              <div className="min-h-0 flex-1 overflow-hidden"><ReportTable /></div>
              <div className="flex h-[14px] shrink-0 items-center gap-1 bg-[#f3f3f3] px-1">
                <svg width="6" height="10" viewBox="0 0 6 10"><path d="M5 0v10L0 5z" fill="#222" /></svg>
                <div className="h-2 w-[641px] rounded bg-[#707070]" />
                <svg width="6" height="10" viewBox="0 0 6 10" className="ml-auto"><path d="M1 0v10l5-5z" fill="#222" /></svg>
              </div>
            </div>
            <div className="w-[14px] shrink-0 pt-[155px] pl-[3px]">
              <div className="h-[148px] w-2 rounded bg-[#cdcdcd]" />
            </div>
          </div>
        </div>
        <div className="flex h-[24px] shrink-0 items-end justify-end bg-[#dddee0] pr-[3px] pb-[3px]">
          <svg width="9" height="9" viewBox="0 0 9 9">
            <path d="M6 0h2v2H6zM3 3h2v2H3zM6 3h2v2H6zM0 6h2v2H0zM3 6h2v2H3zM6 6h2v2H6z" fill="#7d848c" />
          </svg>
        </div>
      </div>
    </section>
  );
}

/* ---------- things floating over the window ---------- */
const LOOP =
  "480,442 493,431 515,414 533,401 543,397 550,395 561,390 572,389.500 584,386.500 600,385.300 615,381.300 655,379 670,376.300 680,373.300 713,373.300 707,376.700 715,374.700 727,370 735,365.300 750,361.700 757,359 767,356.300 783,354.300 970,354.300 1000,356.300 1030,356.700 1087,364 1138,370.300 1177,370.700 1208,373.700 1223,379 1233,383.300 1240,388.300 1253,403.300 1257,412 1262.700,422.300 1262.700,455 1259,463 1258,470 1250,485 1240,499.300 1230,512.300 1218,530 1210,538 1182,545.300 1157,549 1133,553.700 1090,557 1052,564.300 1000,571 960,581.700 880,604 838,613.300 693,613.300 617,600.700 582,597.300 515,585 502,580.500 480,568.300 450,538.300 437.700,518.300 437.300,501.700 440.700,490 448.300,473.300 461.700,456.700";

function Annotation() {
  return (
    <svg className="pointer-events-none absolute top-0 left-0" width="1300" height="640" viewBox="0 0 1300 640">
      <polygon points={LOOP} fill="none" stroke="#fc1f10" strokeWidth="3" strokeLinejoin="round" />
    </svg>
  );
}

function SpeedBall() {
  return (
    <svg className="absolute top-[322px] right-[-20px]" width="72" height="72" viewBox="0 0 72 72">
      <defs>
        <radialGradient id="ball"><stop offset=".6" stopColor="#fff" /><stop offset="1" stopColor="#fde8c4" /></radialGradient>
        <linearGradient id="ring" x1="0" y1="0" x2="0" y2="1"><stop offset="0" stopColor="#fdbd4c" /><stop offset="1" stopColor="#ff9a1a" /></linearGradient>
      </defs>
      <circle cx="36" cy="36" r="34" fill="#000" opacity=".08" />
      <circle cx="36" cy="36" r="33" fill="#fff" />
      <circle cx="36" cy="36" r="28" fill="url(#ball)" stroke="#fbb040" strokeWidth="1" />
      <path d="M36 5.500A30.500 30.500 0 1 1 7 26.600" fill="none" stroke="url(#ring)" strokeWidth="5" />
      <g className="font-['Noto_Sans_CJK_SC',sans-serif]" fill="#444">
        <text x="17" y="37" fontSize="23" fontWeight="300">81</text>
        <text x="43" y="37" fontSize="11">%</text>
        <text x="26" y="53" fontSize="9" fontWeight="500">1.3K/s</text>
      </g>
      <path d="M19.500 46v6M17 50l2.500 3l2.500-3" fill="none" stroke="#19b53c" strokeWidth="1.500" />
    </svg>
  );
}

function ImeBar() {
  return (
    <div className="absolute top-[552px] right-0 flex h-[34px] w-[190px] items-center pl-[21px]">
      <div className="flex h-[27px] flex-1 items-center border-y border-[#b9cfe6] bg-white pl-[18px] text-[#0a6fd0]">
        <svg width="151" height="22" viewBox="0 0 151 22">
          <g fill="none" stroke="#0a6fd8" strokeWidth="2">
            <path d="M1 7h12v6H1zM7 3v16" />
            <circle cx="27" cy="8" r="1.800" strokeWidth="1.200" />
            <path d="M74 10q0 6 5 6t5-6M79 16v4" strokeWidth="1.600" />
          </g>
          <path d="M33 11h3v3l-2 3h-1.500l1-3H33z" fill="#0a6fd8" />
          <circle cx="55.500" cy="11" r="7.500" fill="#0a6fd8" />
          <path d="M52 8v2M59 8v2M51 12.500q4.500 6 9 0z" fill="#fff" stroke="#fff" strokeWidth="1.500" />
          <rect x="76" y="3" width="6" height="11" rx="3" fill="#0a6fd8" />
          <rect x="96.500" y="5.500" width="14" height="11" rx="1" fill="#fff" stroke="#0a6fd8" strokeWidth="1.400" />
          <path d="M98 8.500h11M98 11.500h11M100 14.500h7" stroke="#0a6fd8" strokeWidth="1.500" strokeDasharray="2 1" />
          <circle cx="128" cy="7" r="4" fill="#c4c6c8" />
          <path d="M121 18q0-6 7-6q3 0 4 1v5z" fill="#c4c6c8" />
          <rect x="128" y="11" width="9" height="7" fill="#c4c6c8" />
          <text x="129" y="17" fontSize="6" fill="#fff" fontWeight="700">15</text>
          <path d="M144 6l4-2h4v14h-5V9l-3 1z" fill="#0a6fd8" />
        </svg>
      </div>
      <svg className="absolute -top-[2px] left-0" width="34" height="34" viewBox="0 0 34 34">
        <g transform="rotate(-10 17 17)">
          <rect x="4" y="4" width="26" height="26" rx="3" fill="#f0562a" />
          <path d="M26 9Q10 7 10 12T18 17T25 22T8 25" fill="none" stroke="#fff" strokeWidth="4" />
        </g>
      </svg>
    </div>
  );
}

export default function App() {
  return (
    <div className="relative flex h-screen flex-col overflow-hidden bg-white font-['Noto_Sans','Noto_Sans_CJK_SC',sans-serif] text-[12px] text-black">
      <TopBar />
      <Ribbon />
      <div className="flex h-[28px] shrink-0 items-center gap-[2px] border-b-2 border-[#a9acb1] bg-[#c9ccd1] pl-[2px]">
        <Combo label="楼层" value="第27层" />
        <Combo label="构件类别" value="墙" />
        <Combo label="构件类型" value="砌体墙" />
      </div>
      <main className="flex min-h-0 flex-1">
        <NavPanel />
        <div className="w-1 shrink-0 bg-white" />
        <PropertyColumn />
        <div className="w-[3px] shrink-0 bg-white" />
        <Canvas />
        <LayerPanel />
      </main>
      <ReportDialog />
      <Annotation />
      <SpeedBall />
      <ImeBar />
    </div>
  );
}
